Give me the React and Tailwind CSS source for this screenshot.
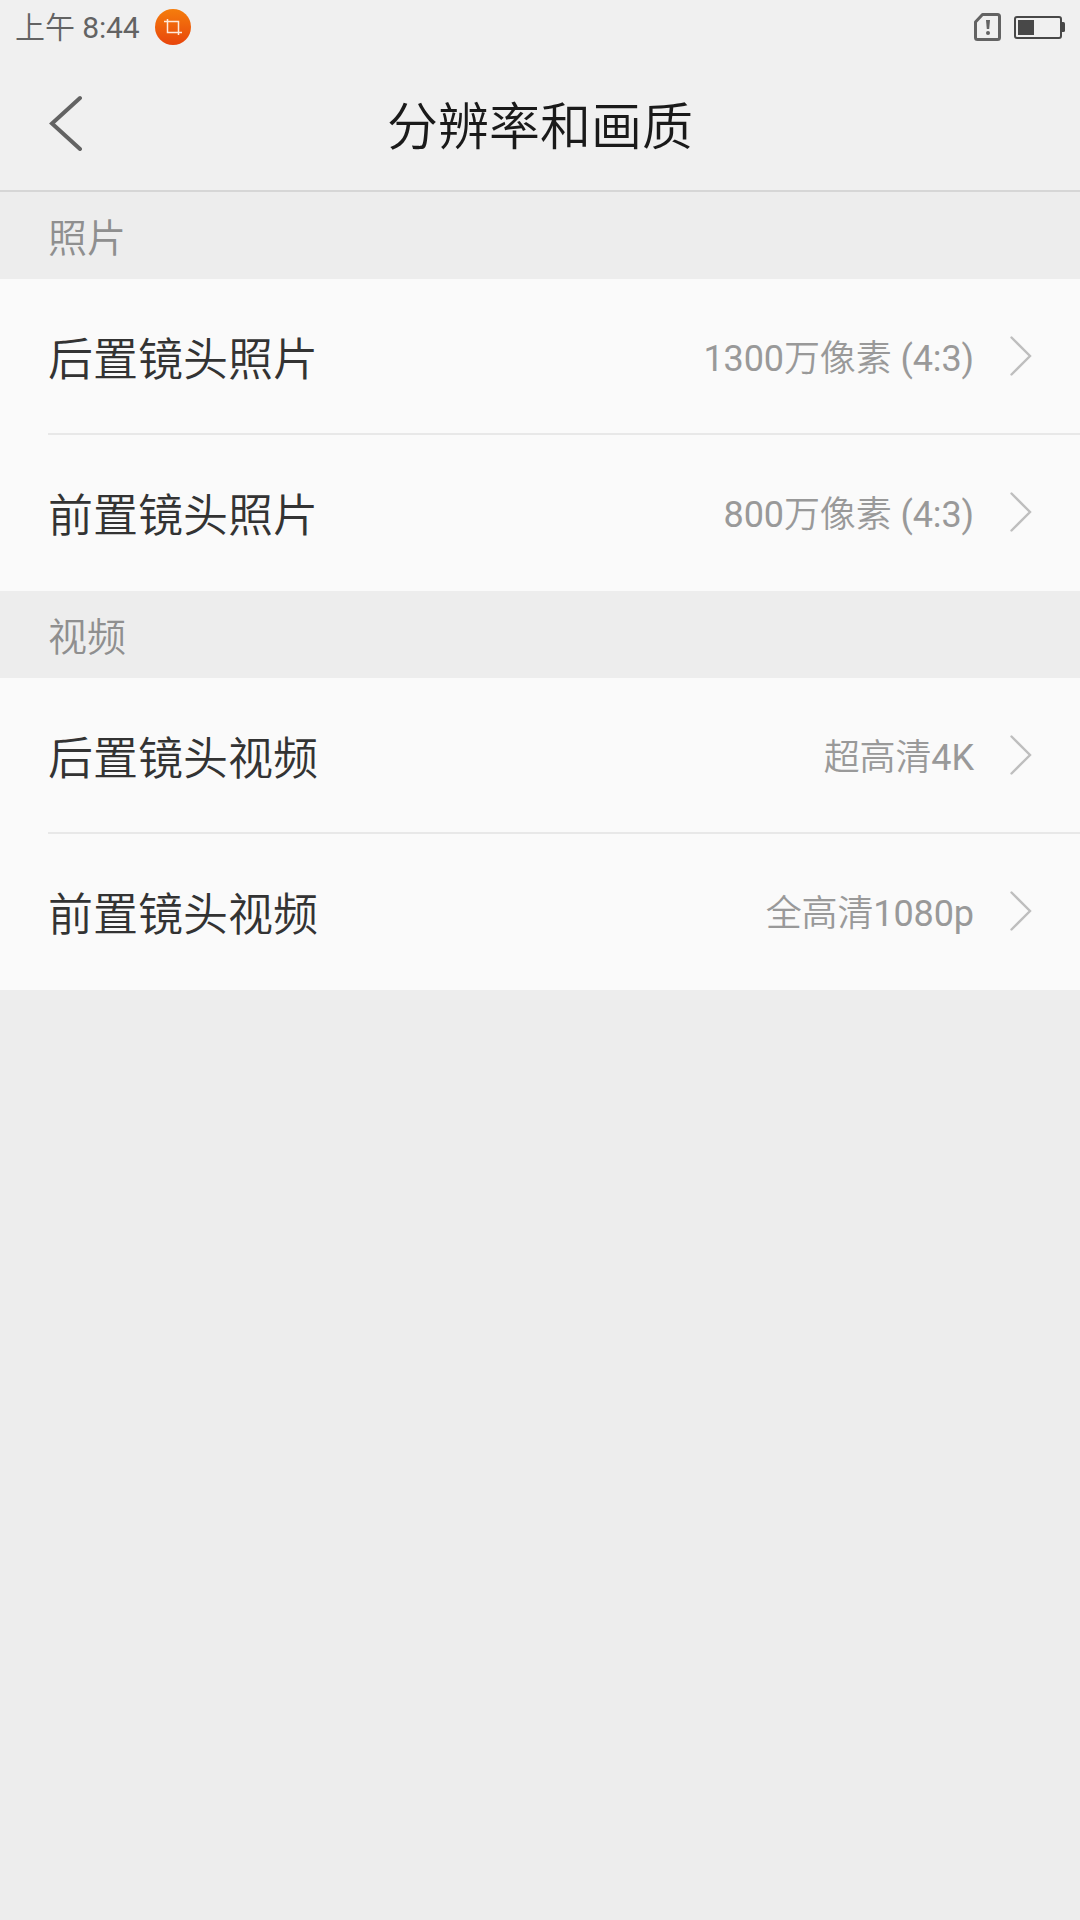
import React from 'react';

const sections = [
  {
    title: '照片',
    rows: [
      { label: '后置镜头照片', value: '1300万像素 (4:3)' },
      { label: '前置镜头照片', value: '800万像素 (4:3)' }
    ]
  },
  {
    title: '视频',
    rows: [
      { label: '后置镜头视频', value: '超高清4K' },
      { label: '前置镜头视频', value: '全高清1080p' }
    ]
  }
];

const CropBadge = () => (
  <svg className="w-9 h-9" viewBox="0 0 36 36" fill="none">
    <defs>
      <linearGradient id="badge" x1="0" y1="0" x2="0" y2="1">
        <stop offset="0" stopColor="#f57d0c" />
        <stop offset="1" stopColor="#e8450c" />
      </linearGradient>
    </defs>
    <circle cx="18" cy="18" r="18" fill="url(#badge)" />
    <path d="M12.5 10V23.5H27M9 12.5H23.5V26" stroke="#ffe9dc" strokeWidth="1.5" />
  </svg>
);

const SimAlert = () => (
  <svg className="w-7 h-[30px]" viewBox="0 0 28 30" fill="none">
    <path
      d="M8.5 2.5H23.5a2 2 0 0 1 2 2V25.5a2 2 0 0 1-2 2H3.5a2 2 0 0 1-2-2V10Z"
      stroke="#636363"
      strokeWidth="3"
      strokeLinejoin="round"
    />
    <path d="M12 8h4l-.8 9h-2.4Z" fill="#636363" />
    <circle cx="14" cy="21" r="2" fill="#636363" />
  </svg>
);

const Battery = () => (
  <svg className="w-[52px] h-6" viewBox="0 0 52 24" fill="none">
    <rect x="1" y="2" width="46" height="21" rx="2" stroke="#484848" strokeWidth="2" />
    <rect x="4" y="5" width="16" height="15" fill="#484848" />
    <path d="M48 7h1.5a1.5 1.5 0 0 1 1.5 1.5v7a1.5 1.5 0 0 1-1.5 1.5H48Z" fill="#484848" />
  </svg>
);

const StatusBar = () => (
  <div className="flex h-[54px] items-center justify-between pl-[15px] pr-[14px]">
    <div className="flex items-center gap-[15px]">
      <span className="pt-0.5 text-[30px] leading-[52px] tracking-[-0.1px] text-[#636363]">上午 8:44</span>
      <CropBadge />
    </div>
    <div className="flex items-center gap-3">
      <SimAlert />
      <Battery />
    </div>
  </div>
);

const Header = () => (
  <header className="grid h-[138px] grid-cols-[120px_1fr_120px] border-b-2 border-[#d6d6d6]">
    <button className="flex items-start pl-[49px] pt-[41px]">
      <svg className="w-[34px] h-14" viewBox="0 0 34 56" fill="none">
        <path d="M31 3 3 28.5 31 54" stroke="#636363" strokeWidth="4" strokeLinecap="round" />
      </svg>
    </button>
    <h1 className="pt-1.5 text-center text-[51px] font-[350] leading-[136px] text-[#1a1a1a]">分辨率和画质</h1>
  </header>
);

const Row = ({ label, value }) => (
  <div className="box-content flex h-[154px] items-center pr-12">
    <span className="flex-1 pt-[9px] text-[45px] font-[350] leading-[64px] text-[#333333]">{label}</span>
    <span className="pt-[6px] text-[36px] leading-[52px] tracking-[-0.1px] text-[#999999]">{value}</span>
    <svg className="ml-9 h-10 w-[22px]" viewBox="0 0 22 40" fill="none">
      <path d="M1.5 1.5 20 20 1.5 38.5" stroke="#bebebe" strokeWidth="2.4" strokeLinecap="round" />
    </svg>
  </div>
);

const App = () => {
  return (
    <div
      className="min-h-screen bg-[#ededed] font-[Roboto,'Noto_Sans_CJK_SC_DemiLight','Noto_Sans_CJK_SC',sans-serif]"
      lang="zh-CN"
    >
      <div className="bg-[#f0f0f0]">
        <StatusBar />
        <Header />
      </div>

      {sections.map((section) => (
        <section key={section.title}>
          <h2 className="h-[87px] pl-12 pt-1 text-[39px] font-[350] leading-[87px] text-[#8f8f8f]">
            {section.title}
          </h2>
          <div className="divide-y-2 divide-[#e8e8e8] bg-[#fafafa] pb-0.5 pl-12">
            {section.rows.map((row) => (
              <Row key={row.label} {...row} />
            ))}
          </div>
        </section>
      ))}
    </div>
  );
};

export default App;
